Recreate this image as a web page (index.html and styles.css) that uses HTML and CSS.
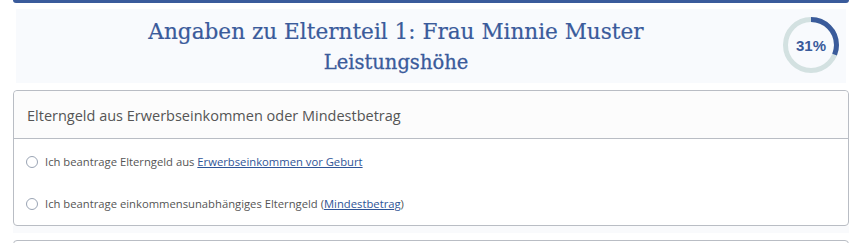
FILE: index.html
```html
<!DOCTYPE html>
<html lang="de">
<head>
<meta charset="utf-8">
<link rel="stylesheet" href="styles.css">
</head>
<body>
<div class="page">
  <div class="topbar"></div>
  <div class="hero">
    <div class="titles">
      <h1 class="title">Angaben zu Elternteil 1: Frau Minnie Muster</h1>
      <h2 class="subtitle">Leistungshöhe</h2>
    </div>
    <div class="progress">
      <svg width="58" height="58" viewBox="0 0 58 58">
        <circle cx="29" cy="29" r="25.5" fill="none" stroke="#d3e1e1" stroke-width="5"/>
        <circle cx="29" cy="29" r="25.5" fill="none" stroke="#3a5b9b" stroke-width="5"
          stroke-dasharray="49.67 200" transform="rotate(-90 29 29)"/>
      </svg>
      <span class="pct">31%</span>
    </div>
  </div>
  <div class="card">
    <div class="card-head">Elterngeld aus Erwerbseinkommen oder Mindestbetrag</div>
    <div class="card-body">
      <label class="opt"><span class="radio"></span><span>Ich beantrage Elterngeld aus <a href="#">Erwerbseinkommen vor Geburt</a></span></label>
      <label class="opt"><span class="radio"></span><span>Ich beantrage einkommensunabhängiges Elterngeld (<a href="#">Mindestbetrag</a>)</span></label>
    </div>
  </div>
  <div class="gap"></div>
  <div class="card next"></div>
</div>
</body>
</html>
```
FILE: styles.css
```css
html, body { margin: 0; padding: 0; background: #fff; }
body { width: 859px; height: 243px; overflow: hidden; font-family: "Open Sans", "Noto Sans", sans-serif; }
.page { margin: 0 10px 0 13px; }
.topbar { height: 3px; background: #3a5b9b; border-radius: 0 0 3px 3px; }
.hero {
  margin: 6px 3px 0 3px;
  height: 74px;
  background: #f8fafd;
  position: relative;
  display: flex;
  justify-content: center;
}
.titles { text-align: center; margin-left: -70px; }
.title {
  margin: 0; padding-top: 8px;
  font-family: "DejaVu Serif", serif;
  font-weight: normal;
  font-size: 21.6px;
  line-height: 30px;
  color: #3a5b9b;
  -webkit-text-stroke: 0.2px #3a5b9b;
}
.subtitle {
  margin: 0; padding-top: 1px;
  font-family: "DejaVu Serif", serif;
  font-weight: normal;
  font-size: 19.5px;
  line-height: 30px;
  color: #3a5b9b;
  -webkit-text-stroke: 0.3px #3a5b9b;
}
.progress {
  position: absolute;
  right: 6px; top: 7px;
  width: 58px; height: 58px;
}
.progress svg { display: block; }
.pct {
  position: absolute; inset: 0;
  display: flex; align-items: center; justify-content: center;
  font-family: "Liberation Sans", Arial, sans-serif;
  font-weight: bold; font-size: 15px; color: #3a5b9b;
}
.card {
  margin-top: 7px;
  border: 1px solid #b9bdc4;
  border-radius: 4px;
  background: #fff;
}
.card-head {
  height: 48px;
  box-sizing: border-box;
  padding: 15px 13px 0;
  background: #fcfcfc;
  border-bottom: 1px solid #b9bdc4;
  border-radius: 4px 4px 0 0;
  font-size: 14.5px;
  color: #555;
}
.card-body { padding: 12px 12px 0; height: 74px; }
.opt {
  display: flex; align-items: center; gap: 7px;
  height: 21px; margin-bottom: 21px;
  font-size: 11.25px; color: #555;
}
.opt a { color: #2f5597; text-decoration: underline; }
.radio {
  width: 10px; height: 10px; border: 1px solid #9aa4b4; border-radius: 50%; background: #fff;
  flex: none;
}
.gap { height: 7px; background: #f9fafc; }
.card.next { margin-top: 7px; height: 40px; border-radius: 4px 4px 0 0; }
```
